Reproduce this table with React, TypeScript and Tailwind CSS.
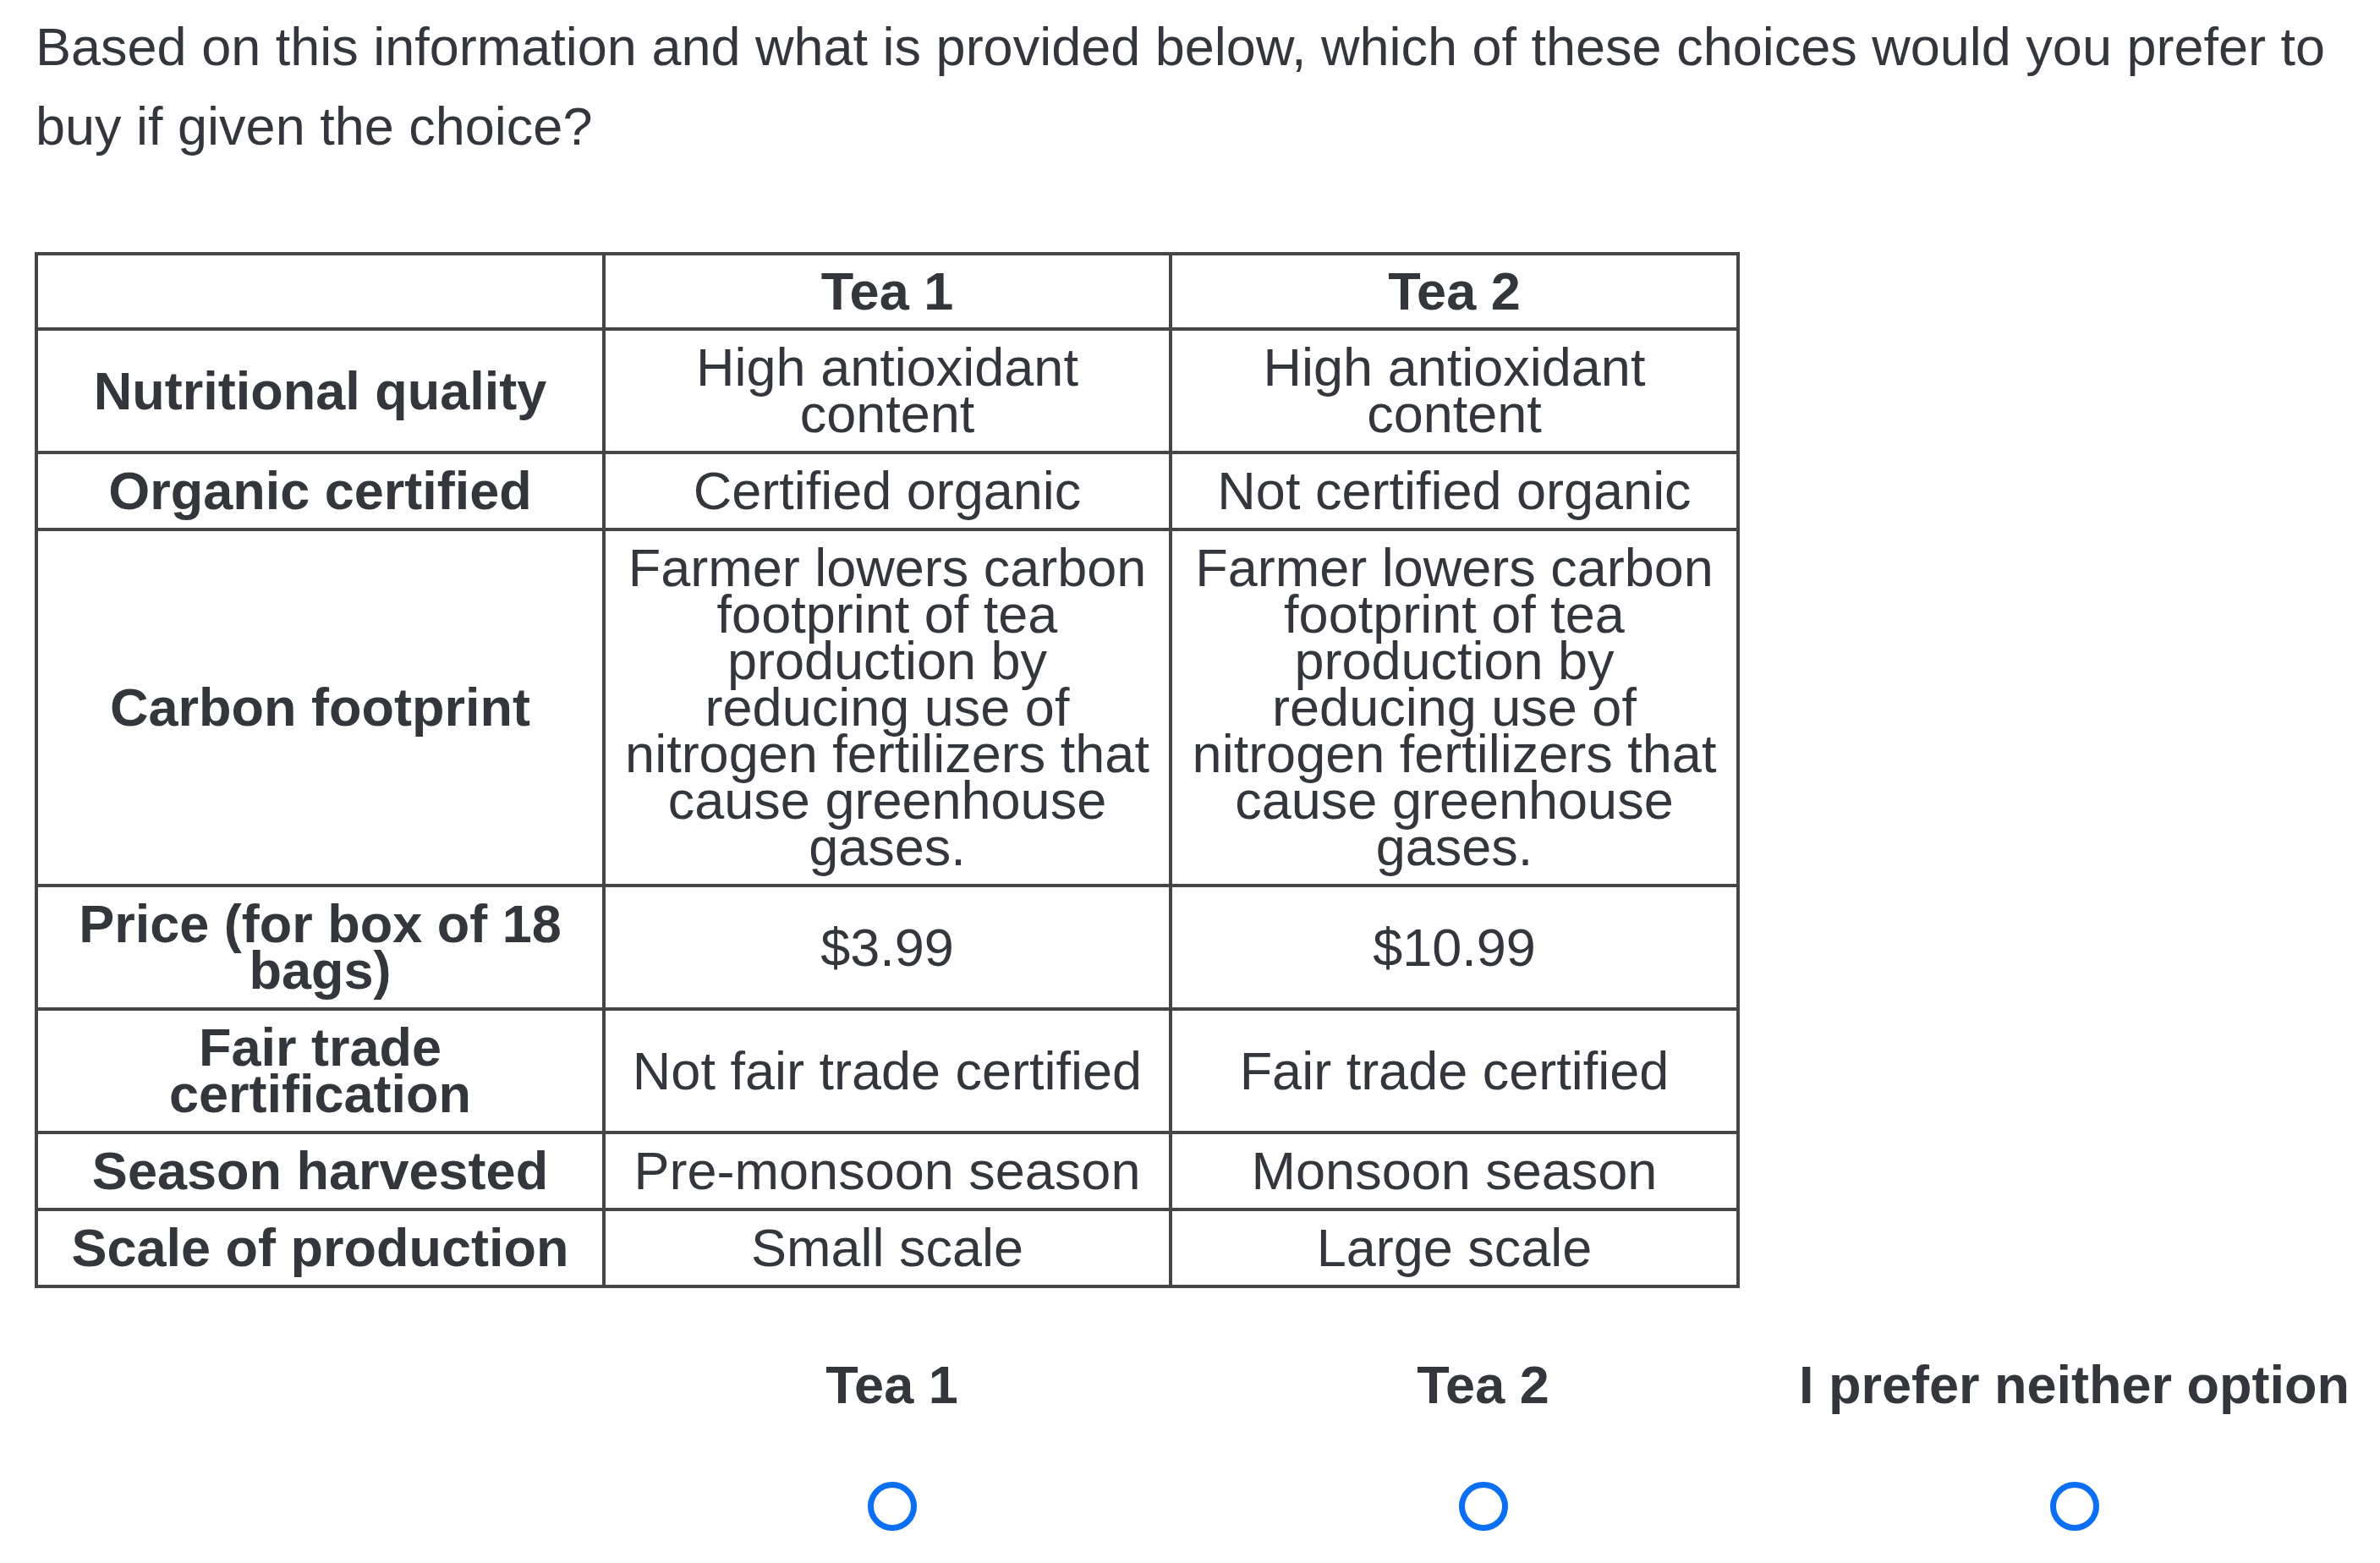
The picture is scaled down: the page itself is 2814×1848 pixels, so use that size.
import React from "react";

const rows: { label: React.ReactNode; a: React.ReactNode; b: React.ReactNode }[] = [
  {
    label: "Nutritional quality",
    a: (<>High antioxidant<br />content</>),
    b: (<>High antioxidant<br />content</>),
  },
  { label: "Organic certified", a: "Certified organic", b: "Not certified organic" },
  {
    label: "Carbon footprint",
    a: (
      <>
        Farmer lowers carbon<br />footprint of tea<br />production by<br />reducing use of<br />nitrogen fertilizers that<br />cause greenhouse<br />gases.
      </>
    ),
    b: (
      <>
        Farmer lowers carbon<br />footprint of tea<br />production by<br />reducing use of<br />nitrogen fertilizers that<br />cause greenhouse<br />gases.
      </>
    ),
  },
  {
    label: (<>Price (for box of 18<br />bags)</>),
    a: "$3.99",
    b: "$10.99",
  },
  {
    label: (<>Fair trade<br />certification</>),
    a: "Not fair trade certified",
    b: "Fair trade certified",
  },
  { label: "Season harvested", a: "Pre-monsoon season", b: "Monsoon season" },
  { label: "Scale of production", a: "Small scale", b: "Large scale" },
];

const cell =
  "border-r-4 border-b-4 border-[#454545] px-[16px] text-center align-middle whitespace-nowrap";

export default function App() {
  return (
    <div
      className="min-h-screen w-full bg-white text-[#33363b]"
      style={{ fontFamily: '"Liberation Sans", Arial, Helvetica, sans-serif' }}
    >
      <p className="pl-[42px] pt-[8px] text-[63px] leading-[94px]">
        Based on this information and what is provided below, which of these choices would you prefer to
        <br />
        buy if given the choice?
      </p>

      <table className="ml-[41px] mt-[102px] w-[2016px] table-fixed border-separate border-spacing-0 border-l-4 border-t-4 border-[#454545] text-[63px] leading-[55px]">
        <colgroup>
          <col className="w-[671px]" />
          <col className="w-[670px]" />
          <col className="w-[671px]" />
        </colgroup>
        <thead>
          <tr>
            <th className={`${cell} py-[15px]`}></th>
            <th className={`${cell} py-[15px] font-bold`}>Tea 1</th>
            <th className={`${cell} py-[15px] font-bold`}>Tea 2</th>
          </tr>
        </thead>
        <tbody>
          {rows.map((r, i) => (
            <tr key={i}>
              <th className={`${cell} py-4 font-bold`}>{r.label}</th>
              <td className={`${cell} py-4 font-normal`}>{r.a}</td>
              <td className={`${cell} py-4 font-normal`}>{r.b}</td>
            </tr>
          ))}
        </tbody>
      </table>

      <div className="mt-[79px] grid grid-cols-[705px_699px_699px_699px]">
        <div></div>
        {["Tea 1", "Tea 2", "I prefer neither option"].map((t) => (
          <div key={t} className="flex flex-col items-center">
            <span className="whitespace-nowrap text-[63px] font-bold leading-[70px]">{t}</span>
            <input
              type="radio"
              name="tea-choice"
              aria-label={t}
              className="mt-[80px] h-[58px] w-[58px] appearance-none rounded-full border-[7px] border-[#0b6ff4] bg-white"
            />
          </div>
        ))}
      </div>
    </div>
  );
}
